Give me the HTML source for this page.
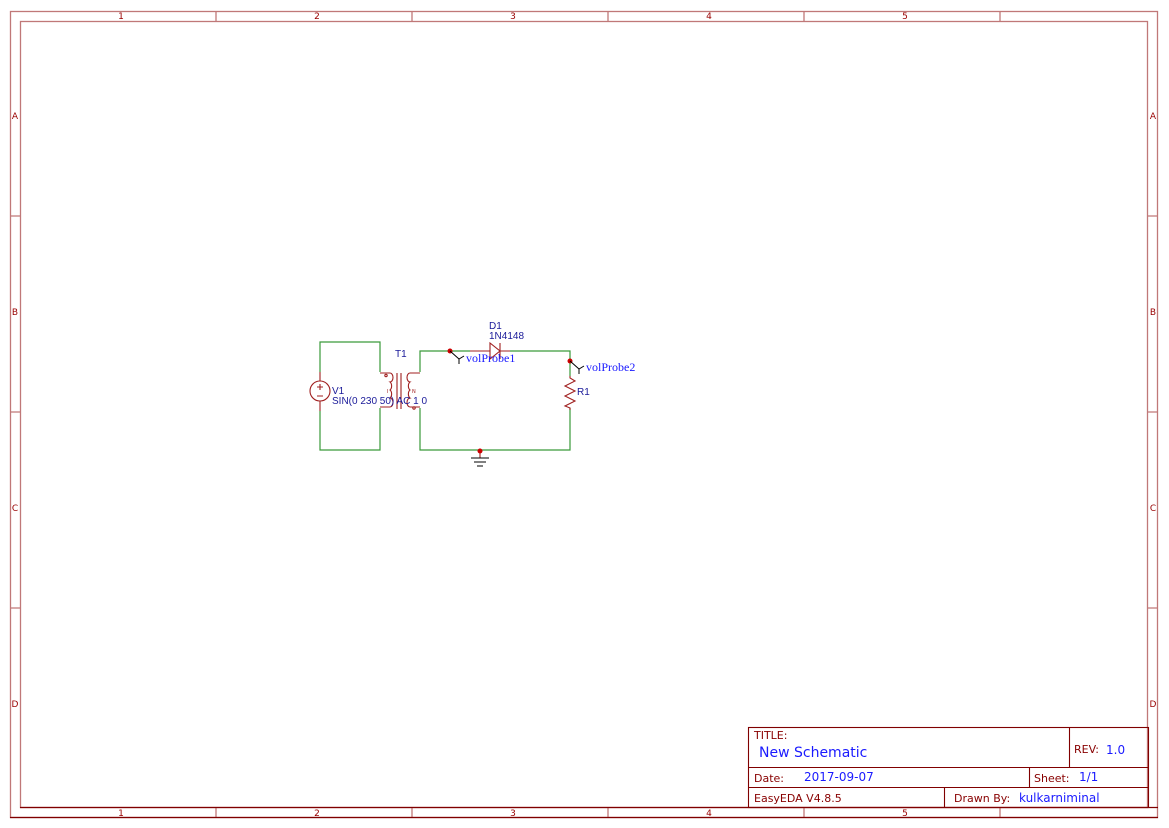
<!DOCTYPE html>
<html><head><meta charset="utf-8"><style>
html,body{margin:0;padding:0;background:#fff;width:1169px;height:828px;overflow:hidden}
svg{display:block}
.f{font-family:"DejaVu Sans","Liberation Sans",sans-serif}
.a{font-family:"Liberation Sans",sans-serif}
</style></head><body>
<svg width="1169" height="828" viewBox="0 0 1169 828" xmlns="http://www.w3.org/2000/svg">
<g fill="none" stroke="#c07878" stroke-width="1.3">
<rect x="10.5" y="11.5" width="1147" height="806"/>
<rect x="20.5" y="21.5" width="1127" height="786"/>
<path d="M216 11v10M412 11v10M608 11v10M804 11v10M1000 11v10M216 807v10M412 807v10M608 807v10M804 807v10M1000 807v10"/>
<path d="M10 216h10M10 412h10M10 608h10M1148 216h10M1148 412h10M1148 608h10"/>
</g>
<path d="M20 807.5h1138M10 817.5h1148" stroke="#800000" stroke-width="1.2"/>
<g class="f" font-size="9" fill="#990000" text-anchor="middle">
<text x="121" y="19">1</text><text x="317" y="19">2</text><text x="513" y="19">3</text><text x="709" y="19">4</text><text x="905" y="19">5</text>
<text x="121" y="816">1</text><text x="317" y="816">2</text><text x="513" y="816">3</text><text x="709" y="816">4</text><text x="905" y="816">5</text>
<text x="15" y="119">A</text><text x="15" y="315">B</text><text x="15" y="511">C</text><text x="15" y="707">D</text>
<text x="1153" y="119">A</text><text x="1153" y="315">B</text><text x="1153" y="511">C</text><text x="1153" y="707">D</text>
</g>
<g fill="none" stroke="#800000" stroke-width="1.1">
<rect x="748.5" y="727.5" width="400" height="80"/>
<path d="M748 767.5h400M748 787.5h400M1069.5 728v40M1029.5 768v20M944.5 788v20"/>
</g>
<g class="f" font-size="11" fill="#880000">
<text x="754" y="739">TITLE:</text>
<text x="1074" y="753">REV:</text>
<text x="754" y="782">Date:</text>
<text x="1034" y="782">Sheet:</text>
<text x="754" y="802">EasyEDA V4.8.5</text>
<text x="954" y="802">Drawn By:</text>
</g>
<g class="f" fill="#1a1aff">
<text x="759" y="757" font-size="14">New Schematic</text>
<text x="1106" y="754" font-size="12">1.0</text>
<text x="804" y="781" font-size="12">2017-09-07</text>
<text x="1079" y="781" font-size="12">1/1</text>
<text x="1019" y="802" font-size="12">kulkarniminal</text>
</g>
<g fill="none" stroke="#3a9a3a" stroke-width="1.2">
<path d="M320 372V342H380V372M320 411V450H380V408"/>
<path d="M420 372V351H470M510 351H570V376M570 408V450H420V408"/>
</g>
<g fill="none" stroke="#a02020" stroke-width="1.1">
<path d="M320 372v9M320 401v10"/>
<circle cx="320" cy="391" r="10"/>
<path d="M320 384v6M317 387h6M317 396h6"/>
<path d="M380 373h10M380 407h10"/>
<path d="M390 373a3 4.5 0 0 1 0 9a3 4.5 0 0 1 0 8a3 4.5 0 0 1 0 8a3 4.5 0 0 1 0 9"/>
<path d="M397 373v36M401 373v36"/>
<path d="M420 373h-10M420 407h-10"/>
<path d="M410 373a3 4.5 0 0 0 0 9a3 4.5 0 0 0 0 8a3 4.5 0 0 0 0 8a3 4.5 0 0 0 0 9"/>
<circle cx="386" cy="375.5" r="1.2"/><circle cx="414" cy="408" r="1.2"/>
<path d="M470 351h20M500 351h10M490 343v16L500 351Z M500 343v16"/>
<path d="M570 376v2l5 3-10 5 10 5-10 5 10 5-10 5 5 2v2"/>
<path d="M480 450v8"/>
</g>
<path d="M471 458h18M474 462h12M477 466h6" stroke="#000" stroke-width="1"/>
<g fill="#cc0000"><circle cx="450" cy="351" r="2.5"/><circle cx="570" cy="361" r="2.5"/><circle cx="480" cy="451" r="2.5"/></g>
<g fill="none" stroke="#000" stroke-width="1">
<path d="M450 351l9 8l5-3M459 359v5"/>
<path d="M570 361l9 8l5-3M579 369v5"/>
</g>
<g font-family="Liberation Serif,serif" font-size="12" fill="#1a1aff">
<text x="466" y="362">volProbe1</text>
<text x="586" y="371">volProbe2</text>
</g>
<g class="a" font-size="10" fill="#1a1a99">
<text x="395" y="357">T1</text>
<text x="332" y="394">V1</text>
<text x="332" y="404">SIN(0 230 50) AC 1 0</text>
<text x="489" y="329">D1</text>
<text x="489" y="339">1N4148</text>
<text x="577" y="395">R1</text>
</g>
<g class="f" font-size="5" fill="#a02020"><text x="387" y="393">I</text><text x="412" y="393">N</text></g>
</svg>
</body></html>
